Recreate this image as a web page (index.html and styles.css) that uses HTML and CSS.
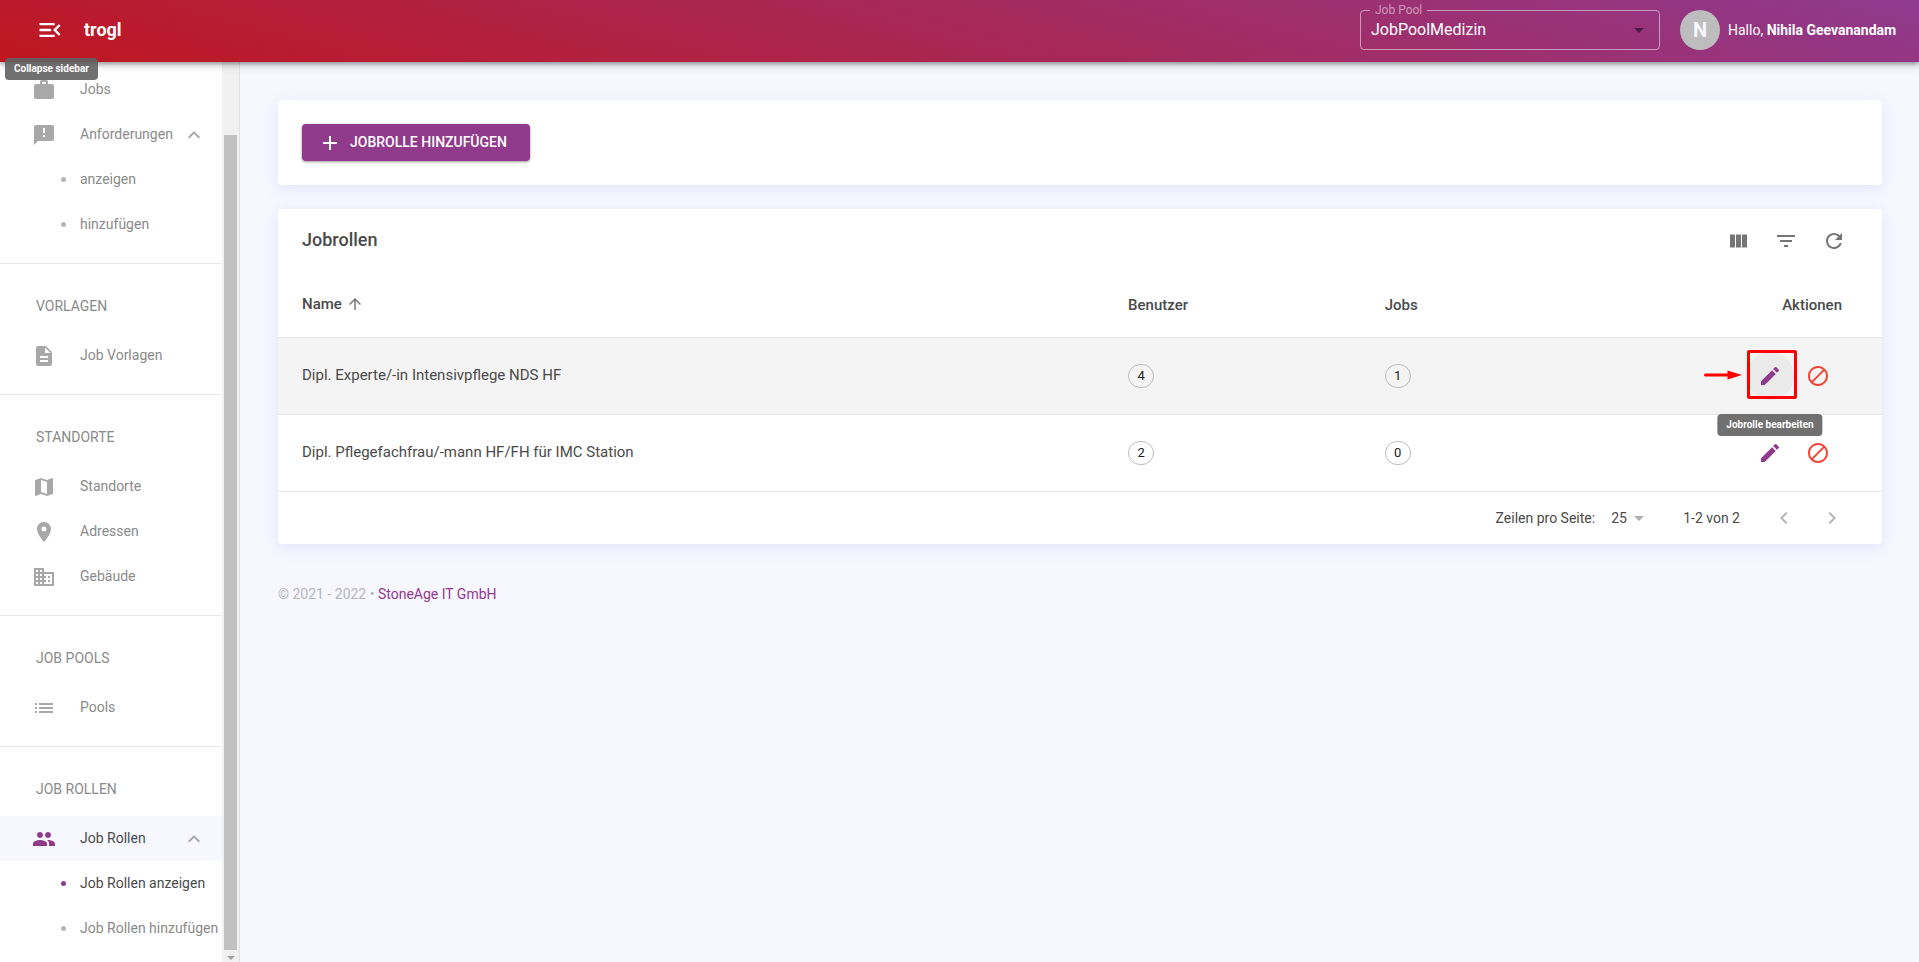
FILE: index.html
```html
<!DOCTYPE html>
<html lang="de">
<head>
<meta charset="utf-8">
<title>trogl – Jobrollen</title>
<meta name="viewport" content="width=device-width, initial-scale=1">
<link rel="stylesheet" href="styles.css">
</head>
<body>
<header class="topbar">
  <button class="menu-toggle" type="button" aria-label="Collapse sidebar">
    <svg class="icon icon-lg" viewBox="0 0 24 24"><path d="M3 18h13v-2H3v2zm0-5h10v-2H3v2zm0-7v2h13V6H3zm18 9.59L17.42 12 21 8.41 19.59 7l-5 5 5 5L21 15.59z"/></svg>
    <span class="tooltip tooltip-menu" role="tooltip">Collapse sidebar</span>
  </button>
  <a class="brand" href="#">trogl</a>
  <fieldset class="pool">
    <legend><label for="pool">Job Pool</label></legend>
    <div class="select-wrap">
      <select id="pool"><option>JobPoolMedizin</option></select>
      <svg class="icon select-arrow" viewBox="0 0 24 24"><path d="M7 10l5 5 5-5z"/></svg>
    </div>
  </fieldset>
  <span class="avatar">N</span>
  <span class="greeting">Hallo, <b>Nihila Geevanandam</b></span>
</header>

<div class="layout">
  <aside class="sidebar">
    <nav class="nav">
      <section class="group">
        <a class="item" href="#"><svg class="icon" viewBox="0 0 24 24"><path d="M10 2h4a2 2 0 0 1 2 2v2h4a2 2 0 0 1 2 2v11a2 2 0 0 1-2 2H4a2 2 0 0 1-2-2V8a2 2 0 0 1 2-2h4V4a2 2 0 0 1 2-2zm4 4V4h-4v2h4z"/></svg><span>Jobs</span></a>
        <a class="item" href="#"><svg class="icon" viewBox="0 0 24 24"><path d="M20 2H4c-1.1 0-1.99.9-1.99 2L2 22l4-4h14c1.1 0 2-.9 2-2V4c0-1.1-.9-2-2-2zm-7 12h-2v-2h2v2zm0-4h-2V5h2v5z"/></svg><span>Anforderungen</span><svg class="icon chevron" viewBox="0 0 24 24"><path d="M12 8l-6 6 1.41 1.41L12 10.83l4.59 4.58L18 14z"/></svg></a>
        <a class="item sub" href="#"><span>anzeigen</span></a>
        <a class="item sub" href="#"><span>hinzufügen</span></a>
      </section>
      <section class="group">
        <h2>VORLAGEN</h2>
        <a class="item" href="#"><svg class="icon" viewBox="0 0 24 24"><path d="M14 2H6c-1.1 0-1.99.9-1.99 2L4 20c0 1.1.89 2 1.99 2H18c1.1 0 2-.9 2-2V8l-6-6zm2 16H8v-2h8v2zm0-4H8v-2h8v2zm-3-5V3.500L18.500 9H13z"/></svg><span>Job Vorlagen</span></a>
      </section>
      <section class="group">
        <h2>STANDORTE</h2>
        <a class="item" href="#"><svg class="icon" viewBox="0 0 24 24"><path d="M20.500 3l-.16.03L15 5.1 9 3 3.36 4.900c-.21.07-.36.25-.36.48V20.500c0 .28.22.5.5.5l.16-.03L9 18.900l6 2.100 5.640-1.900c.21-.07.36-.25.36-.48V3.500c0-.28-.22-.5-.5-.5zM15 19l-6-2.110V5l6 2.110V19z"/></svg><span>Standorte</span></a>
        <a class="item" href="#"><svg class="icon" viewBox="0 0 24 24"><path d="M12 2C8.130 2 5 5.130 5 9c0 5.250 7 13 7 13s7-7.750 7-13c0-3.870-3.130-7-7-7zm0 9.500a2.500 2.500 0 0 1 0-5 2.500 2.500 0 0 1 0 5z"/></svg><span>Adressen</span></a>
        <a class="item" href="#"><svg class="icon" viewBox="0 0 24 24"><path d="M12 7V3H2v18h20V7H12zM6 19H4v-2h2v2zm0-4H4v-2h2v2zm0-4H4V9h2v2zm0-4H4V5h2v2zm4 12H8v-2h2v2zm0-4H8v-2h2v2zm0-4H8V9h2v2zm0-4H8V5h2v2zm10 12h-8v-2h2v-2h-2v-2h2v-2h-2V9h8v10zm-2-8h-2v2h2v-2zm0 4h-2v2h2v-2z"/></svg><span>Gebäude</span></a>
      </section>
      <section class="group">
        <h2>JOB POOLS</h2>
        <a class="item" href="#"><svg class="icon" viewBox="0 0 24 24"><path d="M3 13h2v-2H3v2zm0 4h2v-2H3v2zm0-8h2V7H3v2zm4 4h14v-2H7v2zm0 4h14v-2H7v2zM7 7v2h14V7H7z"/></svg><span>Pools</span></a>
      </section>
      <section class="group">
        <h2>JOB ROLLEN</h2>
        <a class="item open" href="#"><svg class="icon" viewBox="0 0 24 24"><path d="M16 11c1.660 0 2.990-1.340 2.990-3S17.660 5 16 5c-1.660 0-3 1.340-3 3s1.340 3 3 3zm-8 0c1.660 0 2.990-1.340 2.990-3S9.660 5 8 5C6.340 5 5 6.340 5 8s1.340 3 3 3zm0 2c-2.330 0-7 1.170-7 3.500V19h14v-2.500c0-2.330-4.670-3.500-7-3.500zm8 0c-.29 0-.62.02-.97.05 1.160.84 1.970 1.970 1.970 3.450V19h6v-2.500c0-2.330-4.670-3.500-7-3.500z"/></svg><span>Job Rollen</span><svg class="icon chevron" viewBox="0 0 24 24"><path d="M12 8l-6 6 1.41 1.41L12 10.83l4.59 4.58L18 14z"/></svg></a>
        <a class="item sub current" href="#" aria-current="page"><span>Job Rollen anzeigen</span></a>
        <a class="item sub" href="#"><span>Job Rollen hinzufügen</span></a>
      </section>
    </nav>
    <div class="scrollbar" aria-hidden="true">
      <div class="thumb"></div>
      <svg class="scroll-arrow" viewBox="0 0 8 4"><path d="M0 0h8L4 4z"/></svg>
    </div>
  </aside>

  <main class="content">
    <section class="card actions">
      <button class="primary" type="button">
        <svg class="icon" viewBox="0 0 24 24"><path d="M19 13h-6v6h-2v-6H5v-2h6V5h2v6h6v2z"/></svg>
        <span>JOBROLLE HINZUFÜGEN</span>
      </button>
    </section>

    <section class="card">
      <div class="card-head">
        <h1>Jobrollen</h1>
        <div class="tools">
          <button class="icon-btn" type="button" aria-label="Spalten"><svg class="icon" viewBox="0 0 24 24"><path d="M4 5.500h5v13H4zM10 5.500h5v13h-5zM16 5.500h5v13h-5z"/></svg></button>
          <button class="icon-btn" type="button" aria-label="Filter"><svg class="icon" viewBox="0 0 24 24"><path d="M10 18h4v-2h-4v2zM3 6v2h18V6H3zm3 7h12v-2H6v2z"/></svg></button>
          <button class="icon-btn" type="button" aria-label="Aktualisieren"><svg class="icon" viewBox="0 0 24 24"><path d="M17.650 6.350C16.200 4.900 14.210 4 12 4c-4.420 0-7.990 3.580-7.990 8s3.570 8 7.990 8c3.730 0 6.840-2.550 7.730-6h-2.080c-.82 2.330-3.040 4-5.650 4-3.310 0-6-2.690-6-6s2.690-6 6-6c1.660 0 3.140.69 4.220 1.780L13 11h7V4l-2.350 2.350z"/></svg></button>
        </div>
      </div>
      <table class="roles">
        <thead>
          <tr>
            <th class="col-name" aria-sort="ascending"><span class="sort">Name<svg class="icon icon-sm" viewBox="0 0 24 24"><path d="M4 12l1.410 1.410L11 7.830V20h2V7.830l5.580 5.590L20 12l-8-8-8 8z"/></svg></span></th>
            <th>Benutzer</th>
            <th>Jobs</th>
            <th class="col-actions">Aktionen</th>
          </tr>
        </thead>
        <tbody>
          <tr class="hovered">
            <td>Dipl. Experte/-in Intensivpflege NDS HF</td>
            <td><span class="chip">4</span></td>
            <td><span class="chip">1</span></td>
            <td class="col-actions">
              <div class="row-actions">
                <button class="icon-btn edit focus" type="button" aria-label="Jobrolle bearbeiten">
                  <svg class="icon" viewBox="0 0 24 24"><path d="M3 17.250V21h3.750L17.810 9.940l-3.750-3.750L3 17.250zM20.710 7.040a1 1 0 0 0 0-1.410l-2.340-2.340a1 1 0 0 0-1.410 0l-1.830 1.830 3.750 3.750 1.830-1.830z"/></svg>
                  <span class="marker"></span>
                  <svg class="pointer" viewBox="0 0 38 10"><path d="M1.500 3.500h22V.500L38 5 23.500 9.500v-3h-22a1.500 1.500 0 0 1 0-3z"/></svg>
                  <span class="tooltip tooltip-edit" role="tooltip">Jobrolle bearbeiten</span>
                </button>
                <button class="icon-btn block" type="button" aria-label="Jobrolle sperren"><svg class="icon" viewBox="0 0 24 24"><path d="M12 2C6.480 2 2 6.480 2 12s4.480 10 10 10 10-4.480 10-10S17.520 2 12 2zM4 12c0-4.420 3.580-8 8-8 1.850 0 3.550.63 4.900 1.690L5.690 16.900C4.630 15.550 4 13.850 4 12zm8 8c-1.850 0-3.550-.63-4.900-1.690L18.310 7.100C19.370 8.450 20 10.150 20 12c0 4.420-3.580 8-8 8z"/></svg></button>
              </div>
            </td>
          </tr>
          <tr>
            <td>Dipl. Pflegefachfrau/-mann HF/FH für IMC Station</td>
            <td><span class="chip">2</span></td>
            <td><span class="chip">0</span></td>
            <td class="col-actions">
              <div class="row-actions">
                <button class="icon-btn edit" type="button" aria-label="Jobrolle bearbeiten"><svg class="icon" viewBox="0 0 24 24"><path d="M3 17.250V21h3.750L17.810 9.940l-3.750-3.750L3 17.250zM20.710 7.040a1 1 0 0 0 0-1.410l-2.340-2.340a1 1 0 0 0-1.410 0l-1.830 1.830 3.750 3.750 1.830-1.830z"/></svg></button>
                <button class="icon-btn block" type="button" aria-label="Jobrolle sperren"><svg class="icon" viewBox="0 0 24 24"><path d="M12 2C6.480 2 2 6.480 2 12s4.480 10 10 10 10-4.480 10-10S17.520 2 12 2zM4 12c0-4.420 3.580-8 8-8 1.850 0 3.550.63 4.900 1.690L5.690 16.900C4.630 15.550 4 13.850 4 12zm8 8c-1.850 0-3.550-.63-4.900-1.690L18.310 7.100C19.370 8.450 20 10.150 20 12c0 4.420-3.580 8-8 8z"/></svg></button>
              </div>
            </td>
          </tr>
        </tbody>
      </table>
      <div class="pagination">
        <label for="rows">Zeilen pro Seite:</label>
        <div class="select-wrap rows">
          <select id="rows"><option>25</option></select>
          <svg class="icon select-arrow" viewBox="0 0 24 24"><path d="M7 10l5 5 5-5z"/></svg>
        </div>
        <span class="range">1-2 von 2</span>
        <div class="pager">
          <button class="icon-btn" type="button" aria-label="Vorherige Seite" disabled><svg class="icon" viewBox="0 0 24 24"><path d="M15.410 7.410L14 6l-6 6 6 6 1.410-1.410L10.830 12z"/></svg></button>
          <button class="icon-btn" type="button" aria-label="Nächste Seite" disabled><svg class="icon" viewBox="0 0 24 24"><path d="M10 6L8.590 7.410 13.170 12l-4.580 4.590L10 18l6-6z"/></svg></button>
        </div>
      </div>
    </section>

    <footer class="footer">© 2021 - 2022 • <a href="#">StoneAge IT GmbH</a></footer>
  </main>
</div>
</body>
</html>
```

FILE: styles.css
```css
:root {
  --purple: #903a8c;
  --text: #4a4a4a;
  --muted: #8a8a8a;
  --line: #e8e8e8;
  --bg: #f6f7ff;
}

* {
  box-sizing: border-box;
}

body {
  margin: 0;
  height: 100vh;
  display: flex;
  flex-direction: column;
  overflow: hidden;
  background: var(--bg);
  color: var(--text);
  font: 14px/20px Roboto, sans-serif;
}

button,
select {
  margin: 0;
  padding: 0;
  border: 0;
  background: none;
  color: inherit;
  font: inherit;
}

a {
  color: inherit;
  text-decoration: none;
}

h1,
h2 {
  margin: 0;
}

.icon {
  width: 24px;
  height: 24px;
  flex: none;
  display: block;
  fill: currentColor;
}

.icon-lg {
  width: 28px;
  height: 28px;
}

.icon-sm {
  width: 18px;
  height: 18px;
}

/* Top bar */
.topbar {
  position: relative;
  z-index: 2;
  flex: none;
  display: flex;
  align-items: center;
  height: 62px;
  padding: 0 19px 2px 36px;
  background: linear-gradient(15deg, #c0161f, #8f3a8f);
  box-shadow: 0 2px 4px rgba(0, 0, 0, .3), 0 4px 8px rgba(0, 0, 0, .15);
  color: #fff;
}

.menu-toggle {
  position: relative;
}

.brand {
  margin: 0 auto 0 20px;
  font-size: 18px;
  font-weight: 700;
}

.pool {
  width: 300px;
  height: 46px;
  margin: 0 20px 6px 0;
  padding: 0 8px;
  border: 1px solid rgba(255, 255, 255, .5);
  border-radius: 4px;
}

.pool legend {
  margin-left: 1px;
  padding: 0 5px;
  color: rgba(255, 255, 255, .5);
  font-size: 12px;
  line-height: 12px;
}

.pool select {
  height: 28px;
  padding-left: 2px;
  font-size: 16px;
}

.pool .select-arrow {
  color: #4a1a45;
}

.select-wrap {
  display: grid;
  align-items: center;
}

.select-wrap > * {
  grid-area: 1 / 1;
}

.select-wrap select {
  width: 100%;
  appearance: none;
  outline: 0;
}

.select-arrow {
  justify-self: end;
  pointer-events: none;
}

.avatar {
  display: grid;
  place-items: center;
  width: 40px;
  height: 40px;
  margin-right: 8px;
  border-radius: 50%;
  background: #bdbdbd;
  color: var(--bg);
  font-size: 20px;
  font-weight: 700;
}

.greeting {
  min-width: 172px;
}

.tooltip {
  position: absolute;
  padding: 4px 9px;
  border-radius: 4px;
  background: rgba(97, 97, 97, .9);
  color: #fff;
  font-size: 10px;
  font-weight: 700;
  line-height: 14px;
  white-space: nowrap;
}

.tooltip-menu {
  top: 42px;
  left: -31px;
}

/* Sidebar */
.layout {
  flex: 1;
  min-height: 0;
  display: flex;
}

.sidebar {
  flex: none;
  display: flex;
  width: 240px;
  border-right: 1px solid #e0e0e0;
  background: #fff;
  color: var(--muted);
}

.nav {
  flex: 1;
  min-width: 0;
  padding-top: 5px;
  overflow: hidden;
}

.group {
  padding-bottom: 16px;
}

.group + .group {
  border-top: 1px solid var(--line);
}

.group h2 {
  padding: 32px 36px 17px;
  font-size: 14px;
  font-weight: 400;
  line-height: 20px;
}

.item {
  display: flex;
  align-items: center;
  height: 45px;
  padding: 0 16px 0 32px;
  white-space: nowrap;
}

.item span {
  padding-bottom: 2px;
}

.item .icon {
  margin-right: 24px;
  color: #a8a8a8;
}

.item .chevron {
  margin: 0 0 0 auto;
}

.item.sub {
  padding: 0 0 0 61px;
}

.item.sub::before {
  content: "";
  flex: none;
  width: 5px;
  height: 5px;
  margin-right: 14px;
  border-radius: 50%;
  background: #b5b5b5;
}

.item.open {
  background: var(--bg);
  color: var(--text);
}

.item.open .icon:first-child {
  color: var(--purple);
}

.item.current {
  color: var(--text);
}

.item.sub.current::before {
  background: var(--purple);
}

.scrollbar {
  flex: none;
  display: flex;
  flex-direction: column;
  gap: 6px;
  width: 17px;
  padding: 73px 2px 2px;
  background: #f1f1f1;
}

.thumb {
  flex: 1;
  background: #c1c1c1;
}

.scroll-arrow {
  width: 8px;
  height: 4px;
  align-self: center;
  fill: #a0a0a0;
}

/* Content */
.content {
  flex: 1;
  min-width: 0;
  display: flex;
  flex-direction: column;
  gap: 24px;
  padding: 38px 37px 38px 38px;
  overflow: auto;
}

.card {
  border-radius: 4px;
  background: #fff;
  box-shadow: 0 4px 16px rgba(90, 97, 225, .12);
}

.actions {
  padding: 24px;
}

.primary {
  display: flex;
  align-items: center;
  gap: 8px;
  min-width: 228px;
  height: 37px;
  padding: 0 16px;
  border-radius: 4px;
  background: var(--purple);
  box-shadow: 0 1px 3px rgba(0, 0, 0, .4);
  color: #fff;
  font-weight: 500;
}

.primary span {
  padding-bottom: 2px;
}

.card-head {
  display: flex;
  align-items: center;
  justify-content: space-between;
  height: 64px;
  padding: 0 24px;
}

.card-head h1 {
  padding-bottom: 2px;
  font-size: 18px;
  font-weight: 500;
}

.tools,
.pager,
.row-actions {
  display: flex;
}

.icon-btn {
  position: relative;
  display: grid;
  place-items: center;
  width: 48px;
  height: 48px;
  border-radius: 50%;
  color: #757575;
}

.roles {
  width: 100%;
  table-layout: fixed;
  border-collapse: separate;
  border-spacing: 0;
  font-size: 15px;
}

.roles th,
.roles td {
  padding: 0 16px;
  border-bottom: 1px solid var(--line);
  text-align: left;
}

.roles th {
  width: 16%;
  height: 65px;
  font-weight: 500;
}

.roles td {
  height: 77px;
}

.roles th.col-name {
  width: 52%;
}

.roles th:first-child,
.roles td:first-child {
  padding: 0 16px 2px 24px;
}

.roles .col-actions {
  padding-right: 40px;
  text-align: right;
}

.sort {
  display: inline-flex;
  align-items: center;
  gap: 4px;
}

.sort .icon {
  color: #757575;
}

.hovered {
  background: #f4f4f4;
}

.chip {
  display: grid;
  place-items: center;
  width: 26px;
  height: 24px;
  border: 1px solid #bdbdbd;
  border-radius: 12px;
  color: #212121;
  font-size: 13px;
}

.row-actions {
  justify-content: flex-end;
}

.edit {
  color: var(--purple);
}

.edit.focus {
  background: #ebebeb;
}

.block {
  color: #f44336;
}

.marker {
  position: absolute;
  top: -2px;
  left: 1px;
  width: 50px;
  height: 49px;
  border: 3px solid #f00;
  border-radius: 2px;
}

.pointer {
  position: absolute;
  top: 18px;
  left: -42px;
  width: 38px;
  height: 10px;
  fill: #f00;
}

.tooltip-edit {
  top: 62px;
  left: 50%;
  transform: translateX(-50%);
}

.pagination {
  display: flex;
  align-items: center;
  justify-content: flex-end;
  height: 52px;
  padding-right: 26px;
}

.rows {
  margin: 0 32px 0 16px;
}

.rows select {
  padding-right: 24px;
}

.rows .select-arrow {
  color: #b0b0b0;
}

.range {
  margin-right: 20px;
}

.pager .icon-btn {
  color: #b5b5b5;
}

.footer {
  padding-top: 16px;
  color: #b5b5bd;
}

.footer a {
  color: var(--purple);
}
```
